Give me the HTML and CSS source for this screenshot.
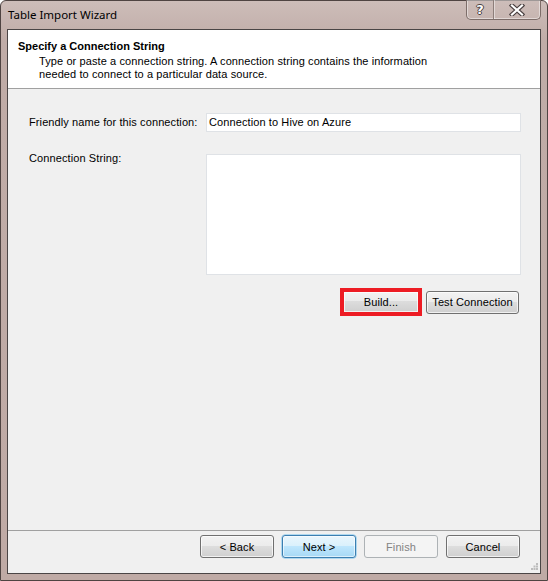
FILE: index.html
```html
<html lang="en">
<head>
  <meta charset="UTF-8" />
  <title>Table Import Wizard</title>
  <link rel="stylesheet" href="styles.css">
</head>
<body>
  <div class="window">
    <div class="titlebar">
      <span class="title">Table Import Wizard</span>
      <div class="caption-buttons">
        <span class="cap-btn help">?</span>
        <span class="cap-btn close">
          <svg width="16" height="12" viewBox="0 0 16 12">
            <path d="M3 1.5 L13 10.5 M13 1.5 L3 10.5" stroke="#4a4040" stroke-width="4.4" stroke-linecap="square" fill="none"/>
            <path d="M3 1.5 L13 10.5 M13 1.5 L3 10.5" stroke="#fff" stroke-width="2.2" stroke-linecap="square" fill="none"/>
          </svg>
        </span>
      </div>
    </div>

    <div class="client">
      <div class="header">
        <div class="header-title">Specify a Connection String</div>
        <div class="header-desc">
          Type or paste a connection string. A connection string contains the information<br>
          needed to connect to a particular data source.
        </div>
      </div>

      <div class="content">
        <div class="field-row">
          <label class="field-label">Friendly name for this connection:</label>
          <div class="text-input">Connection to Hive on Azure</div>
        </div>
        <div class="field-row top">
          <label class="field-label">Connection String:</label>
          <div class="text-area"></div>
        </div>
        <div class="actions">
          <span class="highlight"><button class="btn flat">Build...</button></span>
          <button class="btn test">Test Connection</button>
        </div>
      </div>

      <div class="footer">
        <button class="btn">&lt; Back</button>
        <button class="btn primary">Next &gt;</button>
        <button class="btn disabled">Finish</button>
        <button class="btn">Cancel</button>
        <svg class="grip" width="7" height="7" viewBox="0 0 7 7">
          <rect x="5" y="0" width="2" height="2" fill="#bcbcbc"/>
          <rect x="2.5" y="2.5" width="2" height="2" fill="#bcbcbc"/>
          <rect x="5" y="2.5" width="2" height="2" fill="#bcbcbc"/>
          <rect x="0" y="5" width="2" height="2" fill="#bcbcbc"/>
          <rect x="2.5" y="5" width="2" height="2" fill="#bcbcbc"/>
          <rect x="5" y="5" width="2" height="2" fill="#bcbcbc"/>
        </svg>
      </div>
    </div>
  </div>
</body>
</html>
```

FILE: styles.css
```css
* {
  margin: 0;
  padding: 0;
  box-sizing: border-box;
}

body {
  background: #fff;
  font-family: 'Liberation Sans', Arial, sans-serif;
  font-size: 11px;
  letter-spacing: 0.1px;
  color: #000;
}

.window {
  width: 548px;
  height: 581px;
  border: 1px solid #4f4442;
  border-radius: 6px 6px 0 0;
  background: linear-gradient(#cdbdb9, #c0aca7 40px, #bfaaa5);
  padding: 0 6px 6px;
  display: flex;
  flex-direction: column;
}

.titlebar {
  height: 28px;
  display: flex;
  align-items: flex-start;
}

.title {
  font-family: 'Noto Sans', 'Open Sans', sans-serif;
  font-size: 11.5px;
  letter-spacing: 0;
  line-height: 28px;
  padding-left: 1px;
  color: #000;
}

.caption-buttons {
  margin-left: auto;
  margin-top: -1px;
  display: flex;
  height: 20px;
  border: 1px solid #7d6d69;
  border-top: none;
  border-radius: 0 0 5px 5px;
  box-shadow: inset 0 0 0 1px rgba(255, 255, 255, 0.45);
  overflow: hidden;
}

.cap-btn {
  display: flex;
  align-items: center;
  justify-content: center;
  height: 19px;
}

.cap-btn.help {
  width: 27px;
  border-right: 1px solid #8d7e7a;
  box-shadow: 1px 0 0 rgba(255, 255, 255, 0.45);
  font-family: 'DejaVu Sans', sans-serif;
  font-weight: bold;
  font-size: 13px;
  color: #fff;
  text-shadow: -1px 0 #4a4040, 1px 0 #4a4040, 0 -1px #4a4040, 0 1px #4a4040;
}

.cap-btn.close {
  width: 46px;
}

.client {
  flex: 1;
  border: 1px solid #4a4545;
  background: #f0f0f0;
  display: flex;
  flex-direction: column;
}

.header {
  height: 59px;
  background: #fff;
  border-bottom: 1px solid #a0a0a0;
  padding: 9px 0 0 10px;
}

.header-title {
  font-weight: bold;
  letter-spacing: 0;
  line-height: 14px;
}

.header-desc {
  padding: 2px 0 0 21px;
  line-height: 13px;
}

.content {
  flex: 1;
  padding: 24px 19px 0 21px;
  display: flex;
  flex-direction: column;
}

.field-row {
  display: flex;
  align-items: center;
}

.field-row.top {
  align-items: flex-start;
  margin-top: 22px;
}

.field-label {
  width: 177px;
  line-height: 13px;
}

.field-row.top .field-label {
  margin-top: -2px;
}

.text-input {
  flex: 1;
  height: 19px;
  background: #fff;
  border: 1px solid #dfe2e6;
  padding: 2px 2px;
  line-height: 13px;
}

.text-area {
  flex: 1;
  height: 121px;
  background: #fff;
  border: 1px solid #dfe2e6;
}

.actions {
  display: flex;
  justify-content: flex-end;
  align-items: center;
  gap: 4px;
  margin-top: 13px;
  padding-right: 2px;
}

.highlight {
  display: flex;
  border: 4px solid #ed1c24;
}

.btn {
  font-family: 'Liberation Sans', Arial, sans-serif;
  font-size: 11px;
  letter-spacing: 0.1px;
  color: #000;
  width: 74px;
  height: 23px;
  border: 1px solid #707070;
  border-radius: 3px;
  background: linear-gradient(#f2f2f2, #ebebeb 50%, #dddddd 50%, #cfcfcf);
  box-shadow: inset 0 0 0 1px rgba(255, 255, 255, 0.7);
}

.btn.flat {
  width: 74px;
  height: 20px;
  border: none;
  border-radius: 0;
  background: linear-gradient(#f2f2f2, #ebebeb 45%, #dddddd 45%, #cfcfcf);
}

.btn.test {
  width: 93px;
}

.btn.primary {
  border-color: #3c7fb1;
  background: linear-gradient(#eaf6fd, #d9f0fc 50%, #bee6fd 50%, #a7d9f5);
  box-shadow: inset 0 0 0 1px rgba(255, 255, 255, 0.6), 0 0 0 0.5px #6fc0ee;
}

.btn.disabled {
  border-color: #adb2b5;
  background: #f4f4f4;
  color: #838383;
  box-shadow: none;
}

.footer {
  position: relative;
  height: 43px;
  border-top: 1px solid #a0a0a0;
  display: flex;
  justify-content: flex-end;
  gap: 8px;
  padding: 4px 20px 0 0;
}

.grip {
  position: absolute;
  right: 2px;
  bottom: 3px;
}
```
